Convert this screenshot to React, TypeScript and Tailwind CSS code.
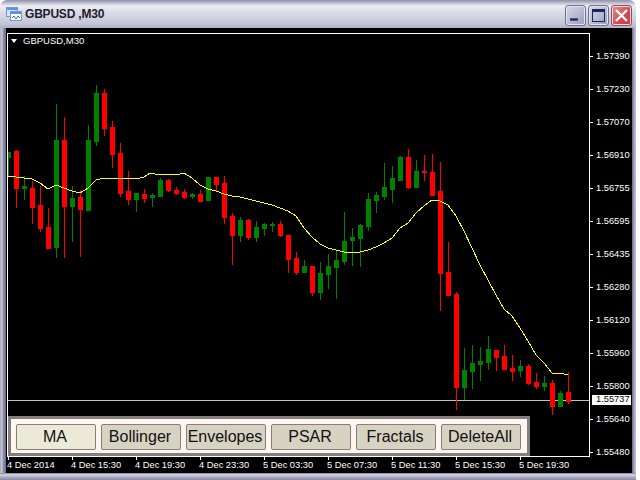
// GBPUSD,M30 chart window
const FONT = "font-['Liberation_Sans',Arial,sans-serif]";

// wick top, wick bottom, body top, body bottom, up?
const candles: [number, number, number, number, boolean][] = [
  [152, 176, 152, 157, true],
  [150, 207, 151, 188, false],
  [176, 199, 186, 188, true],
  [181, 223, 188, 207, false],
  [186, 231, 205, 228, false],
  [208, 248, 227, 248, false],
  [104, 257, 140, 247, true],
  [117, 257, 140, 206, false],
  [186, 241, 198, 206, true],
  [190, 256, 197, 209, false],
  [125, 210, 140, 210, true],
  [85, 145, 93, 141, true],
  [89, 135, 93, 128, false],
  [121, 167, 127, 154, false],
  [143, 196, 153, 193, false],
  [171, 204, 191, 199, false],
  [193, 211, 193, 199, true],
  [189, 202, 194, 198, false],
  [193, 206, 195, 197, true],
  [178, 196, 180, 196, true],
  [179, 191, 180, 190, false],
  [187, 194, 190, 193, false],
  [189, 198, 192, 197, false],
  [193, 198, 194, 196, true],
  [190, 201, 194, 201, false],
  [177, 200, 177, 200, true],
  [177, 191, 177, 184, false],
  [176, 223, 183, 217, false],
  [213, 264, 216, 235, false],
  [217, 241, 220, 235, true],
  [219, 239, 220, 237, false],
  [221, 241, 227, 237, true],
  [223, 235, 224, 228, true],
  [222, 231, 224, 225, true],
  [221, 236, 224, 235, false],
  [235, 272, 235, 259, false],
  [252, 274, 258, 272, false],
  [260, 272, 266, 272, true],
  [266, 295, 266, 292, false],
  [262, 299, 273, 292, true],
  [254, 288, 266, 274, true],
  [250, 298, 260, 267, true],
  [212, 264, 241, 261, true],
  [228, 265, 237, 240, true],
  [224, 266, 225, 238, true],
  [193, 230, 199, 226, true],
  [192, 212, 195, 200, true],
  [163, 199, 187, 196, true],
  [166, 202, 178, 189, true],
  [156, 180, 157, 180, true],
  [149, 188, 157, 187, false],
  [160, 187, 171, 187, true],
  [155, 180, 171, 172, false],
  [154, 195, 172, 195, false],
  [162, 310, 191, 273, false],
  [242, 295, 272, 295, false],
  [292, 409, 294, 387, false],
  [348, 399, 370, 387, true],
  [345, 388, 363, 371, true],
  [347, 380, 361, 364, true],
  [336, 369, 349, 362, true],
  [350, 370, 350, 357, false],
  [345, 369, 356, 369, false],
  [355, 380, 368, 371, false],
  [360, 376, 366, 370, true],
  [364, 384, 366, 383, false],
  [373, 388, 382, 386, false],
  [376, 390, 383, 386, true],
  [380, 414, 383, 406, false],
  [391, 406, 393, 406, true],
  [372, 403, 392, 401, false],
];

const maLine =
  "8,176 16,177 24,178 32,179 40,183 48,189 56,185 64,188 72,191 80,193 88,188 96,180 104,178 128,178 136,179 144,177 150,173 160,175 168,174 180,174 184,173 192,178 200,185 208,189 216,191 224,194 232,196 240,197 248,199 256,201 264,203 272,205 280,208 288,211 296,216 304,228 312,237 320,244 328,248 336,250 344,252 352,252 360,252 368,250 376,247 384,243 392,238 400,228 408,223 416,213 424,206 432,200 440,201 448,205 456,216 464,231 472,248 480,265 488,280 496,295 504,309 512,316 520,328 528,341 536,355 544,363 552,373 560,373 568,375";

const prices = ["1.57390", "1.57230", "1.57070", "1.56910", "1.56755", "1.56595", "1.56435", "1.56280", "1.56120", "1.55960", "1.55800", "1.55640", "1.55480"];
const times = ["4 Dec 2014", "4 Dec 15:30", "4 Dec 19:30", "4 Dec 23:30", "5 Dec 03:30", "5 Dec 07:30", "5 Dec 11:30", "5 Dec 15:30", "5 Dec 19:30"];
const tools = ["MA", "Bollinger", "Envelopes", "PSAR", "Fractals", "DeleteAll"];

function AppIcon() {
  return (
    <svg width="16" height="14" viewBox="0 0 16 14" className="mr-[3px]" shapeRendering="crispEdges">
      <rect x="0.5" y="0.5" width="11" height="9" fill="#cfe3f7" stroke="#6f9bd0" />
      <rect x="1" y="1" width="10" height="2" fill="#5c93d8" />
      <rect x="4.5" y="4.5" width="11" height="9" fill="#ffffff" stroke="#6f9bd0" />
      <rect x="5" y="5" width="10" height="2" fill="#5c93d8" />
      <path d="M6 11l2-2 2 3 2-3 2 2" fill="none" stroke="#3a6fb5" shapeRendering="auto" />
    </svg>
  );
}

function CaptionButton({ kind }: { kind: "min" | "max" | "close" }) {
  const bg =
    kind === "close"
      ? "bg-[linear-gradient(135deg,#e8908c,#d4474c_60%,#c23b45)] border-[#9c4a55]"
      : "bg-[linear-gradient(135deg,#d6d8e8,#b3b6d0_60%,#9a9dbd)] border-[#6d7196]";
  return (
    <div className={`w-[21px] h-[21px] rounded-[3px] border flex items-center justify-center shadow-[inset_0_0_0_1px_#e4e4f0] ${bg}`}>
      {kind === "min" && <div className="w-[8px] h-[3px] bg-[#1e2558] mt-[7px] mr-[3px] border border-white/20" />}
      {kind === "max" && <div className="w-[13px] h-[13px] border border-t-[3px] border-[#1e2558]" />}
      {kind === "close" && (
        <svg width="15" height="15" viewBox="0 0 15 15">
          <path d="M2 2l11 11M13 2L2 13" stroke="#ffffff" strokeWidth="2.4" />
        </svg>
      )}
    </div>
  );
}

export default function App() {
  return (
    <div className={`w-[636px] h-[480px] flex flex-col overflow-hidden rounded-t-[7px] ${FONT}`}>
      {/* title bar */}
      <div className="h-[28px] flex items-center pl-[6px] pr-[4px] bg-[linear-gradient(to_bottom,#8f8fa8_0px,#b0b0c4_2px,#eeeef4_6px,#dcdce8_12px,#c4c4d6_24px,#b0b0c6_28px)]">
        <AppIcon />
        <span className="text-[12px] font-bold text-[#20202c] tracking-[-0.2px]">GBPUSD ,M30</span>
        <div className="ml-auto flex gap-[2px] pt-[3px]">
          <CaptionButton kind="min" />
          <CaptionButton kind="max" />
          <CaptionButton kind="close" />
        </div>
      </div>

      <div className="flex-1 flex min-h-0">
        <div className="w-[6px] bg-[linear-gradient(to_right,#a4a4b8,#c8c8d8_30%,#8c8ca8_60%,#6a6a88)]" />

        {/* client area */}
        <div className="flex-1 bg-black pt-[5px] pl-[1px] flex flex-col text-white">
          <div className="flex">
            {/* plot */}
            <div className="relative w-[583px] h-[424px] border border-white">
              <svg width="581" height="422" viewBox="8 34 581 422" className="block" shapeRendering="crispEdges">
                <rect x="8" y="400" width="581" height="1" fill="#c0c0c0" />
                {candles.map(([hi, lo, top, bottom, up], i) => {
                  const x = 8 + i * 8;
                  const color = up ? "#008000" : "#ff0000";
                  return (
                    <g key={i} fill={color}>
                      <rect x={x} y={hi} width="1" height={lo - hi + 1} />
                      <rect x={x - 2} y={top} width="5" height={bottom - top + 1} />
                    </g>
                  );
                })}
                <polyline points={maLine} fill="none" stroke="#ffff00" strokeWidth="1" />
              </svg>

              <div className="absolute left-[3px] top-[2px] flex items-center text-[9.5px] leading-none">
                <span className="w-0 h-0 border-x-[3px] border-x-transparent border-t-[4px] border-t-white mr-[6px]" />
                GBPUSD,M30
              </div>

              {/* tool buttons */}
              <div className="absolute left-0 bottom-0 w-[522px] h-[40px] border-[3px] border-[#808080] bg-[#fff5ee] pt-[5px] pl-[5px] flex gap-[5px]">
                {tools.map((t, i) => (
                  <button
                    key={t}
                    className={`w-[80px] h-[26px] pr-[2px] border border-[#808080] rounded-[2px] text-[16px] leading-none text-[#111] ${i === 0 ? "bg-[#ece9d8]" : "bg-[#d6d3c3]"}`}
                  >
                    {t}
                  </button>
                ))}
              </div>
            </div>

            {/* price axis */}
            <div className="relative w-[42px] h-[424px] pt-[7px] text-[9.3px] leading-none">
              {prices.map((p) => (
                <div key={p} className="h-[33px] flex items-center">
                  <span className="w-[3px] h-px bg-white mr-[3px]" />
                  {p}
                </div>
              ))}
              <div className="absolute left-[2px] top-[362px] w-[39px] h-[10px] bg-white text-black pl-[4px] flex items-center">1.55737</div>
            </div>
          </div>

          {/* time axis */}
          <div className="flex pl-[1px] text-[9.3px] leading-none">
            {times.map((t) => (
              <div key={t} className="w-[64px] flex flex-col">
                <span className="w-px h-[3px] bg-white" />
                <span className="-ml-[1px] mt-[1px] whitespace-nowrap">{t}</span>
              </div>
            ))}
          </div>
        </div>

        <div className="w-[4px] bg-[linear-gradient(to_right,#6a6a88,#a0a0b8,#c8c8d8)]" />
      </div>

      {/* bottom frame */}
      <div className="h-[7px] bg-[linear-gradient(to_bottom,#7c7c98,#d8d8e4_25%,#b0b0c4_55%,#8888a4)]" />
    </div>
  );
}
